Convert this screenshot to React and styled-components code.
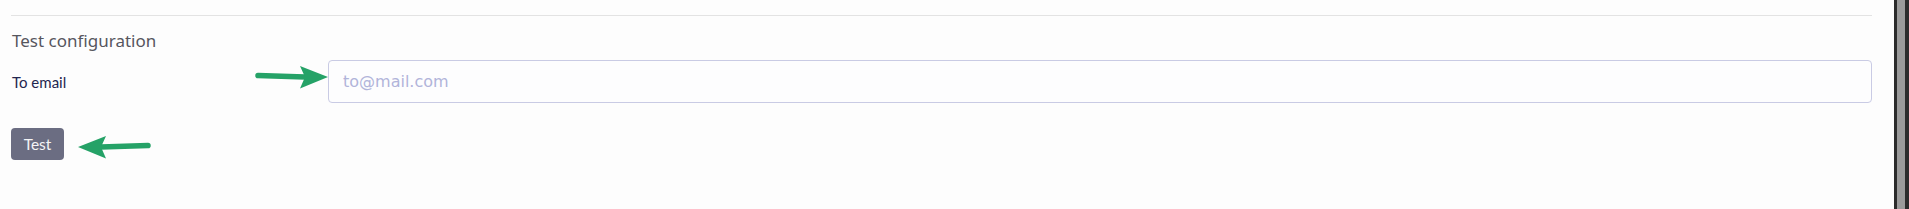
import styled, { createGlobalStyle } from "styled-components";

const GlobalStyle = createGlobalStyle`
  html, body {
    margin: 0;
    padding: 0;
    background: #fdfdfd;
  }
  * {
    box-sizing: border-box;
  }
`;

function Arrow({ direction, top, left }) {
  const right = direction === "right";
  return (
    <ArrowBox style={{ top, left }}>
      <svg width="74" height="24" viewBox="0 0 74 24">
        <g transform={right ? "" : "translate(74 0) scale(-1 1)"}>
          <path d="M3 10.5 L50 12" stroke="#25a267" strokeWidth="5.5" strokeLinecap="round" fill="none" />
          <path d="M45 1 L73 12 L45 23.5 L50 12 Z" fill="#25a267" />
        </g>
      </svg>
    </ArrowBox>
  );
}

function App() {
  return (
    <>
      <GlobalStyle />
      <Page>
        <Main>
          <Section>
            <Heading>Test configuration</Heading>
            <FieldRow>
              <Label>To email</Label>
              <Input placeholder="to@mail.com" />
            </FieldRow>
            <Button>Test</Button>
          </Section>
          <Arrow direction="right" top={65} left={255} />
          <Arrow direction="left" top={135} left={77} />
        </Main>
        <Scrollbar>
          <Thumb />
        </Scrollbar>
      </Page>
    </>
  );
}

const Page = styled.div`
  display: flex;
  width: 1909px;
  height: 209px;
  background: #fdfdfd;
  overflow: hidden;
`;

const Main = styled.div`
  position: relative;
  flex: 1;
  padding: 15px 22px 0 11px;
`;

const Section = styled.div`
  display: flex;
  flex-direction: column;
  align-items: flex-start;
  border-top: 1px solid #e3e3e3;
`;

const Heading = styled.h3`
  margin: 13px 0 0 1px;
  font-family: "Noto Sans", sans-serif;
  font-weight: 400;
  font-size: 17px;
  line-height: 24px;
  color: #56565e;
`;

const FieldRow = styled.div`
  display: grid;
  grid-template-columns: 317px 1fr;
  align-items: center;
  width: 100%;
  margin-top: 7px;
`;

const Label = styled.label`
  padding-left: 1px;
  font-family: Lato, sans-serif;
  font-size: 15px;
  color: #23264f;
`;

const Input = styled.input`
  height: 43px;
  padding: 0 14px;
  border: 1px solid #c9cbe4;
  border-radius: 4px;
  background: #fdfdfe;
  font-family: "DejaVu Sans", sans-serif;
  font-size: 16px;
  outline: none;

  &::placeholder {
    color: #b1b4da;
  }
`;

const Button = styled.button`
  margin-top: 25px;
  width: 53px;
  height: 32px;
  border: none;
  border-radius: 4px;
  background: #6b6d82;
  color: #f4f4f6;
  font-family: Lato, sans-serif;
  font-size: 15.5px;
  cursor: pointer;
`;

const ArrowBox = styled.div`
  position: absolute;
  line-height: 0;
  pointer-events: none;
`;

const Scrollbar = styled.div`
  width: 15px;
  background: #2b2b2b;
  padding: 0 4px 0 3px;
`;

const Thumb = styled.div`
  height: 100%;
  background: #9a9a9a;
`;

export default App;
